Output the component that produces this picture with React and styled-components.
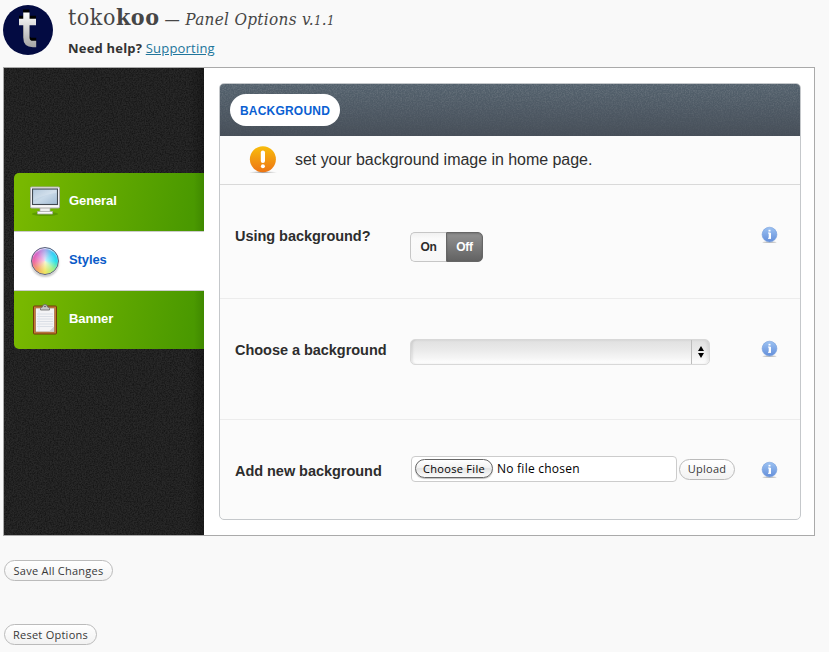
import React from "react";
import styled, { createGlobalStyle } from "styled-components";

const sans = '"Liberation Sans", Arial, sans-serif';
const lucida = '"Open Sans", "Noto Sans", sans-serif';

const GlobalStyle = createGlobalStyle`
  *, *::before, *::after { box-sizing: border-box; }
  body { margin: 0; background: #f9f9f9; font-family: ${sans}; color: #333; overflow: hidden; }
  button { margin: 0; }
`;

const Page = styled.div`
  width: 829px;
  height: 652px;
  padding: 0 0 0 3px;
  display: flex;
  flex-direction: column;
  align-items: flex-start;
`;

const Header = styled.header`
  display: flex;
  height: 67px;
  padding-top: 5px;
  gap: 15px;
`;

const HeaderText = styled.div`
  display: flex;
  flex-direction: column;
`;

const Title = styled.h1`
  margin: 0;
  height: 26px;
  display: flex;
  align-items: baseline;
  color: #464646;
  white-space: nowrap;
`;

const Brand = styled.span`
  font: 400 23px/24px "DejaVu Serif Condensed", "DejaVu Serif", serif;
  font-stretch: condensed;
  letter-spacing: 0.55px;
`;

const Version = styled.em`
  margin-left: 5px;
  font: italic 400 17px/24px "DejaVu Serif Condensed", "DejaVu Serif", serif;
  font-stretch: condensed;
  letter-spacing: 0.3px;
`;

const Digit = styled.span`
  font-size: 13px;
`;

const Help = styled.p`
  margin: 7px 0 0;
  font: 700 13px/20px ${lucida};
  letter-spacing: 0.2px;
  white-space: nowrap;
`;

const HelpLink = styled.a`
  color: #21759b;
  font-weight: 400;
  text-decoration: underline;
`;

const Frame = styled.main`
  width: 812px;
  height: 469px;
  border: 1px solid #aaa;
  background: #fff;
  display: flex;
`;

const Sidebar = styled.nav`
  position: relative;
  width: 200px;
  background: linear-gradient(90deg, #282828 185px, #1e1e1e);
  padding: 105px 0 0 10px;
`;

const Texture = styled.svg`
  position: absolute;
  inset: 0;
  width: 100%;
  height: 100%;
`;

const Menu = styled.div`
  position: relative;
  border-radius: 5px 0 0 5px;
  overflow: hidden;
`;

const MenuItem = styled.a`
  height: ${(p) => (p.$active ? 60 : 58)}px;
  display: flex;
  align-items: center;
  padding: 0 0 3px 15px;
  gap: 8px;
  font: 700 13px/16px ${sans};
  letter-spacing: -0.1px;
  color: ${(p) => (p.$active ? "#0a5bc8" : "#fff")};
  background: ${(p) =>
    p.$active
      ? "#fff"
      : "linear-gradient(90deg, transparent 180px, rgba(20,70,0,.2)), linear-gradient(100deg, #78b800 5%, #4a9900 92%)"};
  border: solid #ccc;
  border-width: ${(p) => (p.$active ? "1px 0" : "0")};
`;

const IconBox = styled.span`
  width: 32px;
  height: 32px;
  display: block;
`;

const Content = styled.section`
  padding: 15px 0 0 15px;
`;

const Box = styled.div`
  width: 582px;
  height: 437px;
  border: 1px solid #c5c8cb;
  border-radius: 5px;
  background: #fbfbfb;
  overflow: hidden;
`;

const BoxHeader = styled.div`
  position: relative;
  height: 52px;
  padding: 10px;
  background: linear-gradient(#53616d, #474f59);
`;

const Tab = styled.span`
  position: relative;
  display: flex;
  align-items: center;
  justify-content: center;
  width: 110px;
  height: 32px;
  border-radius: 16px;
  background: #fff;
  color: #0a5fd2;
  font: 700 12px/16px ${sans};
  letter-spacing: 0.22px;
  padding-top: 1px;
`;

const Notice = styled.div`
  height: 49px;
  border-bottom: 1px solid #d9d9d9;
  display: flex;
  align-items: center;
  padding: 0 0 1px 28px;
  gap: 17px;
  font: 400 16px/20px ${sans};
  letter-spacing: -0.04px;
  color: #2f2f2f;
`;

const Row = styled.div`
  display: grid;
  grid-template-columns: 175px 350px 18px;
  height: ${(p) => p.$h}px;
  padding: 41px 0 0 15px;
  align-items: start;
  border-bottom: ${(p) => (p.$last ? "0" : "1px solid #ececec")};
`;

const Label = styled.label`
  font: 700 14.5px/20px ${sans};
  letter-spacing: -0.04px;
  color: #2d2d2d;
  white-space: nowrap;
`;

const Controls = styled.div`
  display: flex;
  align-items: center;
  margin-top: ${(p) => p.$top || 0}px;
  margin-left: ${(p) => p.$left || 0}px;
  gap: 2px;
`;

const InfoCell = styled.span`
  display: block;
  height: 18px;
`;

const Switch = styled.div`
  display: flex;
  width: 73px;
  height: 30px;
`;

const SwitchPart = styled.button`
  width: ${(p) => (p.$on ? 37 : 36)}px;
  padding: 0;
  border: 1px solid ${(p) => (p.$on ? "#666" : "#c6c6c6")};
  border-width: ${(p) => (p.$on ? "1px" : "1px 0 1px 1px")};
  border-radius: ${(p) => (p.$on ? "0 5px 5px 0" : "5px 0 0 5px")};
  background: ${(p) => (p.$on ? "linear-gradient(#929292, #626262)" : "linear-gradient(#f1f1f1, #fafafa 20%, #f7f7f7)")};
  box-shadow: ${(p) => (p.$on ? "inset 0 1px 2px rgba(0,0,0,.2)" : "none")};
  color: ${(p) => (p.$on ? "#fff" : "#2c2c2c")};
  font: 700 12px/16px ${sans};
  letter-spacing: ${(p) => (p.$on ? -0.2 : -0.3)}px;
`;

const Select = styled.div`
  display: flex;
  width: 300px;
  height: 26px;
  border: 1px solid #d8d8d8;
  border-radius: 5px;
  background: linear-gradient(#e0e0e0, #e9e9e9 38%, #f5f5f5 75%, #fff);
  box-shadow: inset 3px 0 2px -1px rgba(0,0,0,.08), inset -2px 0 3px rgba(0,0,0,.07);
`;

const SelectValue = styled.span`
  flex: 1;
`;

const SelectArrow = styled.span`
  width: 18px;
  border-left: 1px solid #bcbcbc;
  display: flex;
  align-items: center;
  justify-content: center;
`;

const FileField = styled.div`
  width: 266px;
  height: 26px;
  display: flex;
  align-items: center;
  padding: 0 0 1px 3px;
  gap: 4px;
  border: 1px solid #ccc;
  border-radius: 4px;
  background: #fff;
  color: #000;
  font: 400 12px/16px ${lucida};
  letter-spacing: 0.24px;
`;

const FileButton = styled.button`
  width: 78px;
  height: 19px;
  padding: 0;
  border: 1px solid #666;
  border-radius: 10px;
  background: linear-gradient(#fff, #f2f2f2 45%, #e4e4e4 50%, #fbfbfb);
  box-shadow: 0 1px 1px rgba(0,0,0,.25);
  color: #000;
  font: 400 11px/17px ${lucida};
  letter-spacing: 0.3px;
  white-space: nowrap;
`;

const PillButton = styled.button`
  width: ${(p) => p.$w}px;
  height: 21px;
  padding: 0;
  border: 1px solid #bbb;
  border-radius: 11px;
  background: linear-gradient(#fff, #f2f2f2);
  color: #383838;
  font: 400 11px/16px ${lucida};
  letter-spacing: 0.25px;
  white-space: nowrap;
`;

const Actions = styled.div`
  display: flex;
  flex-direction: column;
  gap: 43px;
  padding: 24px 0 0 1px;
`;

function Noise({ id, color, opacity, fade }) {
  return (
    <Texture aria-hidden="true">
      <defs>
        <filter id={id} x="0" y="0" width="100%" height="100%">
          <feTurbulence type="fractalNoise" baseFrequency="0.75" numOctaves="2" seed="4" />
          <feColorMatrix values={`0 0 0 0 ${color}  0 0 0 0 ${color}  0 0 0 0 ${color}  2.4 0 0 0 -0.85`} />
        </filter>
        <linearGradient id={id + "Fade"} x1="0" y1="0" x2="0" y2="1">
          <stop offset="0" stopColor="#fff" />
          <stop offset="1" stopColor={fade ? "#222" : "#fff"} />
        </linearGradient>
        <mask id={id + "Mask"}>
          <rect width="100%" height="100%" fill={`url(#${id}Fade)`} />
        </mask>
      </defs>
      <g mask={`url(#${id}Mask)`}>
        <rect width="100%" height="100%" filter={`url(#${id})`} opacity={opacity} />
      </g>
    </Texture>
  );
}

function Logo() {
  return (
    <svg width="50" height="50" viewBox="0 0 50 50">
      <defs>
        <linearGradient id="logoT" gradientUnits="userSpaceOnUse" x1="0" y1="7" x2="0" y2="42">
          <stop offset="0" stopColor="#fff" />
          <stop offset="1" stopColor="#a5a5a5" />
        </linearGradient>
      </defs>
      <circle cx="25" cy="25" r="25" fill="#030b42" />
      <g fill="none">
        <path d="M23.200 7.500v25q0 6.500 6.500 6.500h3.500M16 17h17" transform="translate(0 -3)" stroke="#000" strokeWidth="6.300" />
        <path d="M23.400 7.500v25q0 6.500 6.500 6.500h3.300M16 17h17" stroke="url(#logoT)" strokeWidth="6.300" />
      </g>
    </svg>
  );
}

function MonitorIcon() {
  return (
    <svg width="32" height="32" viewBox="0 0 32 32">
      <defs>
        <linearGradient id="screen" x1="0" y1="0" x2="1" y2="1">
          <stop offset="0" stopColor="#9fb9d2" />
          <stop offset=".5" stopColor="#c8d9e8" />
          <stop offset="1" stopColor="#a0bad2" />
        </linearGradient>
      </defs>
      <ellipse cx="16" cy="29" rx="13" ry="2" fill="#356c00" opacity=".35" />
      <path d="M11 22h10v5H11z" fill="#eee" stroke="#aaa" strokeWidth=".7" />
      <path d="M8.500 26.500h15v2.500h-15z" fill="#fafafa" stroke="#aaa" strokeWidth=".8" />
      <rect x="1.500" y="2" width="29" height="21" rx="1" fill="#f8f8f8" stroke="#aaa" />
      <rect x="3.500" y="4" width="25" height="15.500" fill="url(#screen)" stroke="#404850" strokeWidth="1.100" />
      <path d="M4.500 5h23v3Q14 9.500 4.500 15.500z" fill="#fff" opacity=".2" />
    </svg>
  );
}

const Wheel = styled.span`
  display: block;
  width: 28px;
  height: 28px;
  margin: 3px 2px 0;
  border: 1px solid #59617c;
  border-radius: 50%;
  background: radial-gradient(circle at 50% 50%, rgba(255,255,255,.75), rgba(255,255,255,0) 60%),
    conic-gradient(#a8a8ea, #35cdf5 45deg, #20e0ed 90deg, #a2ef8a 135deg, #f1e65f 180deg, #f3a963 220deg, #ed63a4 270deg, #d565c8 310deg, #a8a8ea);
  box-shadow: 0 2px 2px rgba(0,0,0,.22), inset 0 1px 1px rgba(255,255,255,.7);
`;

function ClipboardIcon() {
  return (
    <svg width="32" height="32" viewBox="0 0 32 32">
      <rect x="4.500" y="3" width="23" height="28" rx="1" fill="#c77934" stroke="#713a0c" />
      <rect x="6.500" y="5" width="19" height="24" fill="#f4f4f6" stroke="#9a6d49" strokeWidth=".7" />
      <path d="M8 11h16M8 13.500h16M8 16h16M8 18.500h16M8 21h16M8 23.500h16" stroke="#d4d9e2" strokeWidth=".8" />
      <path d="M9.500 6h1v22h-1z" fill="#dce8f2" />
      <path d="M25 23.500v5h-5z" fill="#d1d1d3" />
      <path d="M11.500 7V5.500q0-1.500 2-1.500 0-2.500 2.500-2.500T18.500 4q2 0 2 1.500V7z" fill="#c7c7c7" stroke="#666" strokeWidth=".8" />
      <circle cx="16" cy="3.500" r=".8" fill="#555" />
    </svg>
  );
}

function WarningIcon() {
  return (
    <svg width="30" height="30" viewBox="0 0 30 30">
      <defs>
        <linearGradient id="warn" x1="0" y1="0" x2="0" y2="1">
          <stop offset="0" stopColor="#f8bd0c" />
          <stop offset="1" stopColor="#ed7414" />
        </linearGradient>
        <radialGradient id="warnShade">
          <stop offset="0" stopColor="#777" stopOpacity=".8" />
          <stop offset="1" stopColor="#999" stopOpacity="0" />
        </radialGradient>
      </defs>
      <ellipse cx="15" cy="27.300" rx="14.500" ry="1.300" fill="url(#warnShade)" />
      <circle cx="14.900" cy="14.300" r="13" fill="url(#warn)" />
      <path d="M14.900 7.500v8.500" stroke="#fff" strokeWidth="4.200" strokeLinecap="round" />
      <circle cx="14.900" cy="21.300" r="2" fill="#fff" />
    </svg>
  );
}

function InfoIcon() {
  return (
    <svg width="18" height="18" viewBox="0 0 18 18">
      <defs>
        <linearGradient id="info" x1="0" y1="0" x2="0" y2="1">
          <stop offset="0" stopColor="#9cc2f2" />
          <stop offset="1" stopColor="#648fda" />
        </linearGradient>
      </defs>
      <ellipse cx="9.500" cy="16.200" rx="7" ry=".8" fill="#aaa" opacity=".7" />
      <circle cx="9.500" cy="8.600" r="7.400" fill="url(#info)" stroke="#759ddb" strokeWidth=".6" />
      <path d="M8 7h2.500v5.500M8 12.300h3" fill="none" stroke="#fff" strokeWidth="1" />
      <path d="M9.600 7v5.500" stroke="#fff" strokeWidth="1.800" />
      <path d="M8.500 3.800h2v1.700h-2z" fill="#fff" />
    </svg>
  );
}

export default function App() {
  return (
    <>
      <GlobalStyle />
      <Page>
        <Header>
          <Logo />
          <HeaderText>
            <Title>
              <Brand>toko<b>koo</b></Brand>
              <Version>— Panel Options v.<Digit>1</Digit>.<Digit>1</Digit></Version>
            </Title>
            <Help>Need help? <HelpLink>Supporting</HelpLink></Help>
          </HeaderText>
        </Header>
        <Frame>
          <Sidebar>
            <Noise id="sidebarNoise" color="0" opacity="0.42" />
            <Menu>
              <MenuItem><IconBox><MonitorIcon /></IconBox>General</MenuItem>
              <MenuItem $active><IconBox><Wheel /></IconBox>Styles</MenuItem>
              <MenuItem><IconBox><ClipboardIcon /></IconBox>Banner</MenuItem>
            </Menu>
          </Sidebar>
          <Content>
            <Box>
              <BoxHeader>
                <Noise id="headerNoise" color="0.6" opacity="0.18" fade />
                <Tab>BACKGROUND</Tab>
              </BoxHeader>
              <Notice><WarningIcon />set your background image in home page.</Notice>
              <Row $h={114}>
                <Label>Using background?</Label>
                <Controls $top={6}>
                  <Switch>
                    <SwitchPart>On</SwitchPart>
                    <SwitchPart $on>Off</SwitchPart>
                  </Switch>
                </Controls>
                <InfoCell><InfoIcon /></InfoCell>
              </Row>
              <Row $h={121}>
                <Label>Choose a background</Label>
                <Controls $top={-1}>
                  <Select>
                    <SelectValue />
                    <SelectArrow>
                      <svg width="6" height="12" viewBox="0 0 6 12">
                        <path d="M0 5h6L3 0zM0 7h6l-3 5z" fill="#000" />
                      </svg>
                    </SelectArrow>
                  </Select>
                </Controls>
                <InfoCell><InfoIcon /></InfoCell>
              </Row>
              <Row $h={100} $last>
                <Label>Add new background</Label>
                <Controls $top={-5} $left={1}>
                  <FileField><FileButton>Choose File</FileButton>No file chosen</FileField>
                  <PillButton $w={56}>Upload</PillButton>
                </Controls>
                <InfoCell><InfoIcon /></InfoCell>
              </Row>
            </Box>
          </Content>
        </Frame>
        <Actions>
          <PillButton $w={109}>Save All Changes</PillButton>
          <PillButton $w={93}>Reset Options</PillButton>
        </Actions>
      </Page>
    </>
  );
}
